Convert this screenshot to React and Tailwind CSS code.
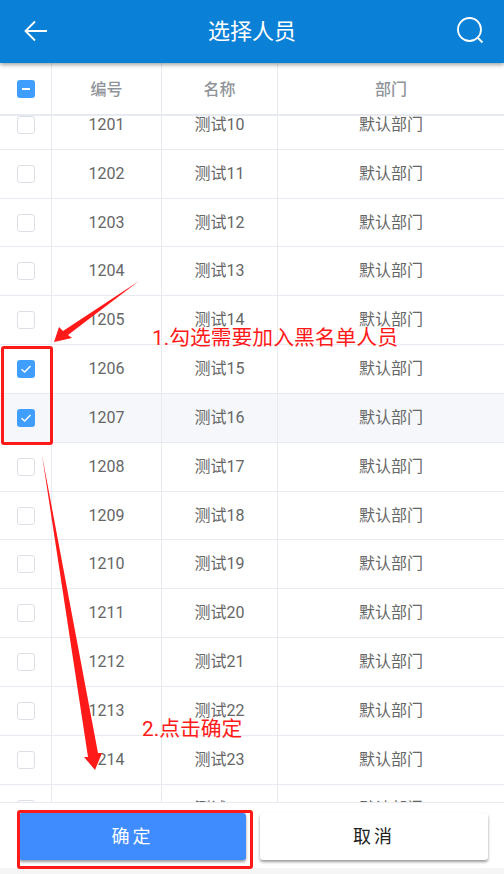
import React from "react";

const rows = [];
for (let i = 0; i < 15; i++) {
  rows.push({ id: 1201 + i, name: "测试" + (10 + i) });
}

const Checkbox = ({ checked, partial }) => {
  if (partial) {
    return (
      <div className="w-[18px] h-[18px] rounded-[3px] bg-[#409eff] flex items-center justify-center">
        <div className="w-[8px] h-[2px] bg-white" />
      </div>
    );
  }
  if (checked) {
    return (
      <div className="w-[18px] h-[18px] rounded-[3px] bg-[#409eff] flex items-center justify-center">
        <svg width="12" height="12" viewBox="0 0 12 12" fill="none" stroke="#fff" strokeWidth="1.4">
          <path d="M1.5 6.2 L4.7 9 L10.5 3" />
        </svg>
      </div>
    );
  }
  return <div className="w-[18px] h-[18px] rounded-[3px] bg-white border border-[#dcdfe6]" />;
};

const Row = ({ row }) => {
  const selected = row.id === 1206 || row.id === 1207;
  return (
    <div className={`flex h-[48.83px] shrink-0 border-b border-[#e8eaf2] text-[16px] text-[#666666] ${row.id === 1207 ? "bg-[#f5f7fa]" : "bg-white"}`}>
      <div className="w-[52px] flex items-center justify-center border-r border-[#e8eaf2]">
        <Checkbox checked={selected} />
      </div>
      <div className="w-[110px] flex items-center justify-center border-r border-[#e8eaf2]">{row.id}</div>
      <div className="w-[116px] flex items-center justify-center border-r border-[#e8eaf2]">{row.name}</div>
      <div className="flex-1 flex items-center justify-center">默认部门</div>
    </div>
  );
};

const App = () => {
  return (
    <div className="relative w-[504px] h-[874px] flex flex-col overflow-hidden bg-[#f5f5f5] font-['Roboto','Noto_Sans_CJK_SC',sans-serif]">
      <div className="relative z-10 h-[63px] shrink-0 bg-[#0a80d6] shadow-[0_2px_4px_rgba(0,0,0,0.35)] flex items-center justify-between pl-[22px] pr-[20px] text-white">
        <svg className="-mt-[1px]" width="26" height="22" viewBox="0 0 26 22" fill="none" stroke="#fff" strokeWidth="1.8">
          <path d="M25 11 H4 M13 1.5 L3.5 11 L13 20.5" />
        </svg>
        <div className="text-[22px]">选择人员</div>
        <svg className="-mt-[3px]" width="28" height="28" viewBox="0 0 28 28" fill="none" stroke="#fff" strokeWidth="1.8">
          <circle cx="13.5" cy="13.5" r="11.5" />
          <path d="M22 22 L26.5 26.5" />
        </svg>
      </div>

      <div className="flex h-[53px] shrink-0 bg-white border-b-2 border-[#e8eaf2] text-[16px] font-medium text-[#909399]">
        <div className="w-[52px] flex items-center justify-center border-r border-[#e8eaf2]">
          <Checkbox partial />
        </div>
        <div className="w-[110px] pt-[2px] flex items-center justify-center border-r border-[#e8eaf2]">编号</div>
        <div className="w-[116px] pt-[2px] flex items-center justify-center border-r border-[#e8eaf2]">名称</div>
        <div className="flex-1 pt-[2px] flex items-center justify-center">部门</div>
      </div>

      <div className="flex-1 min-h-0 overflow-hidden bg-white">
        <div className="-mt-[15px] flex flex-col">
          {rows.map((row) => (
            <Row key={row.id} row={row} />
          ))}
        </div>
      </div>

      <div className="h-[66px] shrink-0 bg-white border-t border-[#e8eaf2] flex gap-[14px] pl-[19px] pr-[16px] pt-[10px]">
        <button className="w-[227px] h-[47px] rounded-[3px] bg-[#3f8cff] text-white text-[18px] tracking-[3px] shadow-[0_2px_3px_rgba(0,0,0,0.4)]">确定</button>
        <button className="flex-1 h-[47px] rounded-[3px] bg-white text-[#222] text-[18px] tracking-[3px] shadow-[0_2px_3px_rgba(0,0,0,0.4)]">取消</button>
      </div>
      <div className="h-[6px] shrink-0 bg-[#f5f5f5]" />

      {/* annotations drawn over the screenshot */}
      <div className="absolute left-[1px] top-[346px] w-[52px] h-[99px] border-[3px] border-[#ff1a1a] rounded-[3px]" />
      <div className="absolute left-[17px] top-[810px] w-[236px] h-[59px] border-[3px] border-[#ff1a1a] rounded-[3px]" />
      <div className="absolute left-[152px] top-[324px] text-[20.8px] leading-[28px] whitespace-nowrap text-[#ff1a1a]">1.勾选需要加入黑名单人员</div>
      <div className="absolute left-[142px] top-[715px] text-[20.8px] leading-[28px] whitespace-nowrap text-[#ff1a1a]">2.点击确定</div>
      <svg className="absolute left-0 top-0 pointer-events-none" width="504" height="874" viewBox="0 0 504 874" fill="#ff1a1a">
        <polygon points="139,281 68,335 72,338 54,342 59,327 63,331" />
        <polygon points="42,455 98,753 102,753 95,770 84,757 88,757" />
      </svg>
    </div>
  );
};

export default App;
